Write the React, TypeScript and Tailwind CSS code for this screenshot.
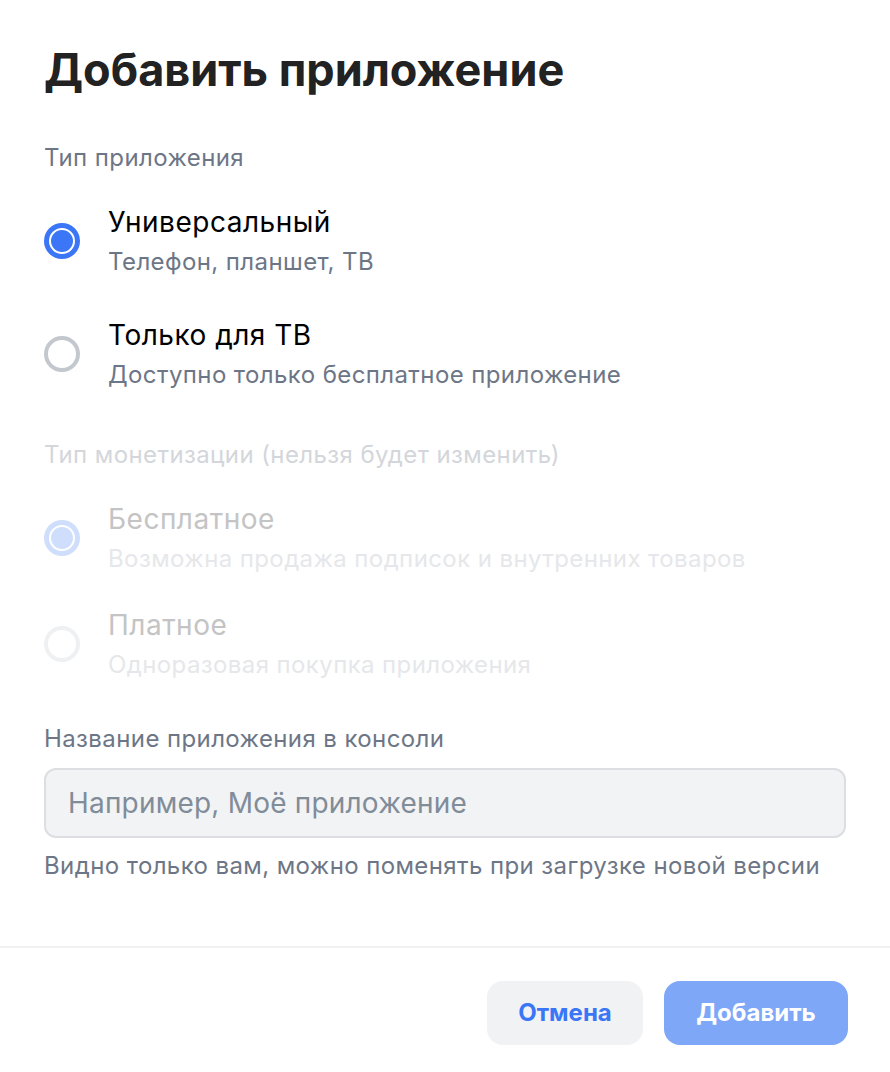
import React from "react";

const FONT = { fontFamily: "Inter, 'Liberation Sans', sans-serif" };

function Radio({ checked, disabled }: { checked: boolean; disabled?: boolean }) {
  if (checked) {
    return (
      <span
        className={
          "flex h-9 w-9 shrink-0 items-center justify-center rounded-full " +
          (disabled ? "bg-[#cfdefc]" : "bg-[#3a76f6]")
        }
      >
        <span
          className={
            "h-[26px] w-[26px] rounded-full border-2 border-white " +
            (disabled ? "bg-[#cfdefc]" : "bg-[#3a76f6]")
          }
        />
      </span>
    );
  }
  return (
    <span
      className={
        "h-9 w-9 shrink-0 rounded-full border-[4px] " +
        (disabled ? "border-[#eef0f2]" : "border-[#c3c7ce]")
      }
    />
  );
}

function Option({
  title,
  hint,
  checked,
  disabled,
  className,
}: {
  title: string;
  hint: string;
  checked: boolean;
  disabled?: boolean;
  className?: string;
}) {
  return (
    <div className={"flex items-center gap-7 " + (className ?? "")}>
      <Radio checked={checked} disabled={disabled} />
      <div className="flex flex-col">
        <span
          className={
            "text-[28px] leading-8 tracking-[0.5px] " +
            (disabled ? "text-[#c4c4c4]" : "text-black")
          }
        >
          {title}
        </span>
        <span
          className={
            "mt-[10px] text-[24px] leading-7 tracking-[0.4px] " +
            (disabled ? "text-[#e6e7ea]" : "text-[#6d7686]")
          }
        >
          {hint}
        </span>
      </div>
    </div>
  );
}

export default function App() {
  return (
    <div className="flex h-[1072px] w-[890px] flex-col bg-white" style={FONT}>
      <div className="flex flex-col px-[44px] pt-[46px]">
        <h1 className="text-[45px] font-bold leading-[48px] text-[#222222]">
          Добавить приложение
        </h1>

        <div className="mt-[50px] text-[24px] leading-7 tracking-[0.4px] text-[#6d7686]">
          Тип приложения
        </div>
        <Option
          className="mt-[34px]"
          title="Универсальный"
          hint="Телефон, планшет, ТВ"
          checked
        />
        <Option
          className="mt-[43px]"
          title="Только для ТВ"
          hint="Доступно только бесплатное приложение"
          checked={false}
        />

        <div className="mt-[52px] text-[24px] leading-7 tracking-[0.4px] text-[#d3d6db]">
          Тип монетизации (нельзя будет изменить)
        </div>
        <Option
          className="mt-[34px]"
          title="Бесплатное"
          hint="Возможна продажа подписок и внутренних товаров"
          checked
          disabled
        />
        <Option
          className="mt-[36px]"
          title="Платное"
          hint="Одноразовая покупка приложения"
          checked={false}
          disabled
        />

        <label className="mt-[46px] text-[24px] leading-7 tracking-[0.4px] text-[#6d7686]">
          Название приложения в консоли
        </label>
        <input
          placeholder="Например, Моё приложение"
          className="mt-[15px] h-[70px] w-full rounded-xl border-2 border-[#dcdee2] bg-[#f2f3f5] px-[22px] text-[28px] tracking-[0.2px] text-[#222] outline-none placeholder:text-[#818c99]"
        />
        <div className="mt-[14px] text-[24px] leading-7 tracking-[0.4px] text-[#6d7686]">
          Видно только вам, можно поменять при загрузке новой версии
        </div>
      </div>

      <div className="mt-auto border-t-2 border-[#f0f1f3]">
        <div className="flex justify-end gap-[21px] pb-[27px] pl-[44px] pr-[42px] pt-[33px]">
          <button className="h-16 w-[156px] rounded-2xl bg-[#f1f2f4] text-[24px] font-bold text-[#3a76f6]">
            Отмена
          </button>
          <button className="h-16 w-[184px] rounded-2xl bg-[#7ea7f8] text-[24px] font-bold text-white">
            Добавить
          </button>
        </div>
      </div>
    </div>
  );
}
